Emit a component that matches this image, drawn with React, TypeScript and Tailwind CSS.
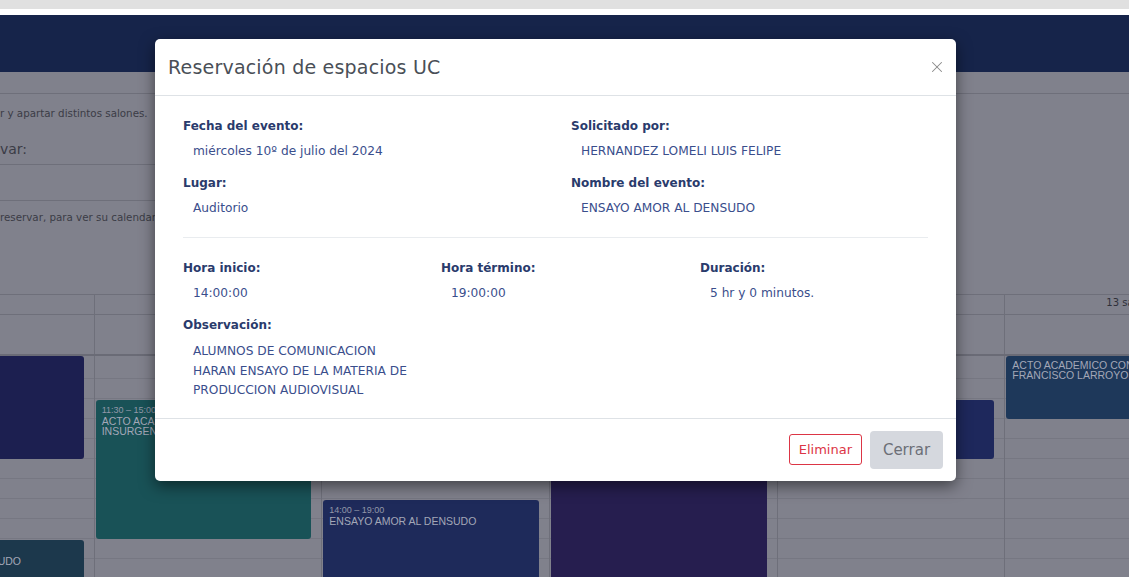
import { X } from "lucide-react";

type CalEvent = {
  col: number;
  top: number;
  height: number;
  color: string;
  time?: string;
  title?: string;
};

const events: CalEvent[] = [
  { col: 0, top: 0, height: 103, color: "bg-[#1c1f50]" },
  { col: 0, top: 184, height: 60, color: "bg-[#1c384c]", time: "14:00 – 19:00", title: "ENSAYO AMOR AL DENSUDO" },
  { col: 1, top: 44, height: 139, color: "bg-[#195257]", time: "11:30 – 15:00", title: "ACTO ACADEMICO LICENCIATURA INSURGENTES" },
  { col: 2, top: 144, height: 120, color: "bg-[#1e2a5a]", time: "14:00 – 19:00", title: "ENSAYO AMOR AL DENSUDO" },
  { col: 3, top: 60, height: 220, color: "bg-[#261e4f]" },
  { col: 4, top: 44, height: 59, color: "bg-[#1e285c]" },
  { col: 5, top: 0, height: 63, color: "bg-[#1e385a]", title: "ACTO ACADEMICO CONMEMORATIVO FRANCISCO LARROYO" },
];

const headers = ["", "", "", "", "", "13 sáb."];

function Field({ label, value }: { label: string; value: string }) {
  return (
    <div>
      <p className="text-[12px] leading-[18px] font-bold text-[#2a3b6c]">{label}</p>
      <p className="mt-[7px] pl-[10px] text-[12.2px] leading-[18px] text-[#3a4e8c]">{value}</p>
    </div>
  );
}

export default function App() {
  return (
    <div className="relative h-[577px] w-full overflow-hidden bg-[#80818c] font-['DejaVu_Sans',sans-serif]">
      <div className="h-[9px] bg-[#e0e0e0]" />
      <div className="h-[6px] bg-white" />
      <div className="h-[57px] bg-[#16244a]" />
      <div className="h-[22px] border-b border-[#6e6f7a]" />

      {/* form area behind the modal */}
      <div className="w-[420px]">
        <p className="mt-[12px] text-[10.3px] leading-[14px] text-[#3b3c46] whitespace-nowrap">r y apartar distintos salones.</p>
        <p className="mt-[20px] text-[14px] leading-[18px] text-[#3b3c46]">var:</p>
        <div className="mt-[6px] h-[37px] border-y border-[#6e6f7a]" />
        <p className="mt-[9px] text-[10.3px] leading-[14px] text-[#3b3c46] whitespace-nowrap">reservar, para ver su calendario</p>
      </div>

      {/* calendar */}
      <div className="absolute top-[294px] left-[-134px] w-[1366px] border-t border-[#6e6f7a]">
        <div className="grid grid-cols-6 h-[20px] border-b border-[#6e6f7a]">
          {headers.map((h, i) => (
            <div key={i} className="border-l border-[#6e6f7a] text-[10px] leading-[16px] text-[#2f3039] pl-[101px] whitespace-nowrap">
              {h}
            </div>
          ))}
        </div>
        <div className="grid grid-cols-6 h-[41px] border-b-2 border-[#6a6b76]">
          {headers.map((_, i) => (
            <div key={i} className="border-l border-[#6e6f7a]" />
          ))}
        </div>
        <div className="relative">
          <div className="h-[23px] border-b border-[#767782]" />
          {Array.from({ length: 10 }).map((_, i) => (
            <div key={i} className="h-[20px] border-b border-[#767782]" />
          ))}
          <div className="absolute inset-0 grid grid-cols-6">
            {headers.map((_, c) => (
              <div key={c} className="relative border-l border-[#6e6f7a]">
                {events
                  .filter((e) => e.col === c)
                  .map((e, k) => (
                    <div
                      key={k}
                      className={`absolute left-[1px] right-[10px] rounded-[3px] overflow-hidden px-[6px] pt-[4px] font-['Liberation_Sans',sans-serif] ${e.color}`}
                      style={{ top: e.top, height: e.height }}
                    >
                      {e.time && <p className="text-[9px] leading-[12px] text-[#9297a8]">{e.time}</p>}
                      {e.title && <p className="text-[10.5px] leading-[10px] text-[#a3a7b7] uppercase">{e.title}</p>}
                    </div>
                  ))}
              </div>
            ))}
          </div>
        </div>
      </div>

      {/* modal */}
      <div className="absolute left-[155px] top-[39px] w-[801px] h-[442px] bg-white rounded-[5px] shadow-[0_5px_15px_rgba(0,0,0,0.5)] flex flex-col">
        <div className="h-[58px] flex items-center justify-between pl-[13px] pr-[10px] border-b border-[#dee2e6]">
          <h2 className="text-[19px] text-[#4a4f57] tracking-[0.2px]">Reservación de espacios UC</h2>
          <X size={18} strokeWidth={1.4} className="text-[#8a8a8a]" />
        </div>

        <div className="pl-[28px] pr-[28px] pt-[21px] pb-[17px] flex-1">
          <div className="grid grid-cols-[388px_1fr] gap-y-[14px]">
            <Field label="Fecha del evento:" value="miércoles 10º de julio del 2024" />
            <Field label="Solicitado por:" value="HERNANDEZ LOMELI LUIS FELIPE" />
            <Field label="Lugar:" value="Auditorio" />
            <Field label="Nombre del evento:" value="ENSAYO AMOR AL DENSUDO" />
          </div>

          <div className="mt-[20px] border-t border-[#e9ecef]" />

          <div className="mt-[21px] grid grid-cols-[258px_259px_1fr] gap-y-[14px]">
            <Field label="Hora inicio:" value="14:00:00" />
            <Field label="Hora término:" value="19:00:00" />
            <Field label="Duración:" value="5 hr y 0 minutos." />
            <div className="col-span-3">
              <p className="text-[12px] leading-[18px] font-bold text-[#2a3b6c]">Observación:</p>
              <p className="mt-[8px] pl-[10px] w-[232px] text-[12.2px] leading-[19.5px] text-[#3a4e8c]">
                ALUMNOS DE COMUNICACION HARAN ENSAYO DE LA MATERIA DE PRODUCCION AUDIOVISUAL
              </p>
            </div>
          </div>
        </div>

        <div className="h-[64px] border-t border-[#dee2e6] flex items-center justify-end gap-[8px] pr-[13px]">
          <button className="h-[31px] px-[9px] rounded-[3px] border border-[#dc3545] text-[13px] text-[#dc3545] bg-white">
            Eliminar
          </button>
          <button className="h-[38px] w-[73px] rounded-[4px] bg-[#d5d8de] text-[15px] text-[#6c6f77]">Cerrar</button>
        </div>
      </div>
    </div>
  );
}
